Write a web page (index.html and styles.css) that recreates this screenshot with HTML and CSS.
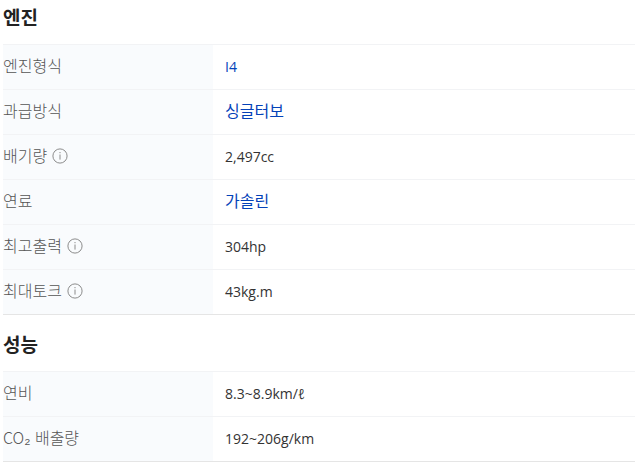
FILE: index.html
```html
<!DOCTYPE html>
<html lang="ko">
<head>
  <meta charset="UTF-8">
  <meta name="viewport" content="width=device-width, initial-scale=1">
  <title>엔진 / 성능</title>
  <link rel="stylesheet" href="styles.css">
</head>

<body>

<!-- shared info icon -->
<svg class="sprite" aria-hidden="true">
  <symbol id="ico-info" viewBox="0 0 16 16">
    <circle cx="8" cy="8" r="7.1" fill="none" stroke="currentColor"/>
    <path d="M8 6.5V11.6" fill="none" stroke="currentColor"/>
    <rect x="7.5" y="4" width="1" height="1.2" fill="currentColor"/>
  </symbol>
</svg>

<main class="spec">
  <section class="spec-group">
    <h3 class="spec-title">엔진</h3>
    <table class="spec-table">
      <tbody>
        <tr>
          <th scope="row">엔진형식</th>
          <td><a href="#">I4</a></td>
        </tr>
        <tr>
          <th scope="row">과급방식</th>
          <td class="ko"><a href="#">싱글터보</a></td>
        </tr>
        <tr>
          <th scope="row">배기량<button type="button" class="info-btn" aria-label="배기량 설명"><svg><use href="#ico-info"/></svg></button></th>
          <td>2,497cc</td>
        </tr>
        <tr>
          <th scope="row">연료</th>
          <td class="ko"><a href="#">가솔린</a></td>
        </tr>
        <tr>
          <th scope="row">최고출력<button type="button" class="info-btn" aria-label="최고출력 설명"><svg><use href="#ico-info"/></svg></button></th>
          <td>304hp</td>
        </tr>
        <tr>
          <th scope="row">최대토크<button type="button" class="info-btn" aria-label="최대토크 설명"><svg><use href="#ico-info"/></svg></button></th>
          <td>43kg.m</td>
        </tr>
      </tbody>
    </table>
  </section>

  <section class="spec-group">
    <h3 class="spec-title">성능</h3>
    <table class="spec-table">
      <tbody>
        <tr>
          <th scope="row">연비</th>
          <td>8.3~8.9km/ℓ</td>
        </tr>
        <tr>
          <th scope="row">CO₂ 배출량</th>
          <td>192~206g/km</td>
        </tr>
      </tbody>
    </table>
  </section>
</main>

</body>
</html>
```

FILE: styles.css
```css
* {
  margin: 0;
  padding: 0;
  box-sizing: border-box;
}

body {
  background-color: #fff;
  color: #333;
  font-family: "Noto Sans CJK KR", sans-serif;
}

.sprite {
  display: none;
}

.spec {
  padding: 0 1px 0 3px;
}

.spec-group + .spec-group {
  padding-top: 12px;
}

.spec-title {
  padding: 3px 0 13px;
  font-size: 19px;
  line-height: 28px;
  font-weight: 700;
  color: #222;
}

.spec-table {
  width: 100%;
  border-collapse: separate;
  border-spacing: 0;
  border-bottom: 1px solid #e5e5e5;
}

.spec-table th,
.spec-table td {
  height: 45px;
  border-top: 1px solid #f2f3f5;
  text-align: left;
  vertical-align: middle;
  line-height: 24px;
}

.spec-table th {
  width: 210px;
  padding-bottom: 4px;
  background-color: #f9fbfd;
  font-size: 16px;
  font-weight: 300;
  color: #555;
}

.spec-table td {
  padding-left: 12px;
  font-family: "Open Sans", "Noto Sans CJK KR", sans-serif;
  font-size: 14px;
}

.spec-table td.ko {
  padding-bottom: 4px;
  font-family: "Noto Sans CJK KR", sans-serif;
  font-size: 16px;
}

.spec-table a {
  color: #0442b8;
  text-decoration: none;
}

.info-btn {
  width: 16px;
  height: 16px;
  margin-left: 5px;
  border: 0;
  background: none;
  color: #8c8c8c;
  vertical-align: -2px;
  cursor: pointer;
}

.info-btn svg {
  display: block;
  width: 16px;
  height: 16px;
}
```
